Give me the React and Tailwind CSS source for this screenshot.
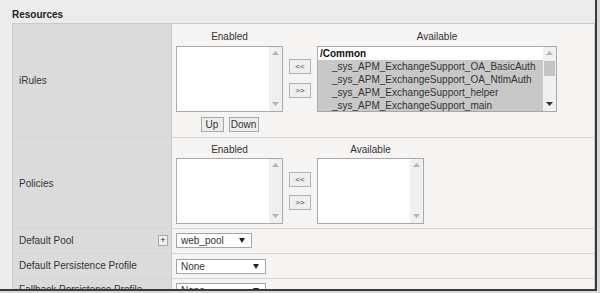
import React from "react";

function Up({ c = "#a8a8a8" }) {
  return (
    <svg width="7" height="4" viewBox="0 0 7 4">
      <path d="M0 4L3.5 0L7 4Z" fill={c} />
    </svg>
  );
}
function Down({ c = "#a8a8a8" }) {
  return (
    <svg width="7" height="4" viewBox="0 0 7 4">
      <path d="M0 0L3.5 4L7 0Z" fill={c} />
    </svg>
  );
}

function ListBox({ w, children, thumb, downDark }) {
  return (
    <div
      className="h-[66px] border border-[#a9a9a9] bg-white flex"
      style={{ width: w }}
    >
      <div className="flex-1 overflow-hidden">{children}</div>
      <div className="w-[13px] bg-[#f0f0f0] flex flex-col items-center justify-between pt-[4px] pb-[5px] relative">
        <Up c="#b4b4b4" />
        {thumb && (
          <div className="absolute left-[1px] right-[1px] top-[14px] h-[15px] bg-[#c4c4c4]" />
        )}
        <Down c={downDark ? "#333" : "#b4b4b4"} />
      </div>
    </div>
  );
}

function MoveButtons() {
  return (
    <div className="flex flex-col gap-[9px]">
      <div className="w-[22px] h-[15px] border border-[#b3b3b3] bg-[#efefef] flex items-center justify-center text-[8px] leading-none text-[#444]">
        &lt;&lt;
      </div>
      <div className="w-[22px] h-[15px] border border-[#b3b3b3] bg-[#efefef] flex items-center justify-center text-[8px] leading-none text-[#444]">
        &gt;&gt;
      </div>
    </div>
  );
}

function Select({ w, value }) {
  return (
    <div
      className="h-[15px] border border-[#a5a5a5] bg-white flex items-center justify-between pl-[4px] pr-[6px] text-[10px] text-[#333]"
      style={{ width: w }}
    >
      <span>{value}</span>
      <svg width="6" height="5" viewBox="0 0 6 5">
        <path d="M0 0L3 5L6 0Z" fill="#222" />
      </svg>
    </div>
  );
}

const items = [
  "_sys_APM_ExchangeSupport_OA_BasicAuth",
  "_sys_APM_ExchangeSupport_OA_NtlmAuth",
  "_sys_APM_ExchangeSupport_helper",
  "_sys_APM_ExchangeSupport_main",
];

export default function App() {
  return (
    <div className="w-[600px] h-[293px] bg-[#d9d9d9] overflow-hidden font-['Liberation_Sans',Arial,sans-serif] text-[10px] text-[#333]">
      <div className="w-[597px] h-[291px] bg-[#ececec] border-r-2 border-b-2 border-[#3a3a3a] overflow-hidden pl-[12px]">
        <div className="h-[23px] pt-[9px] font-bold leading-[12px] text-[#222]">
          Resources
        </div>
        <div className="border-t border-l border-r border-[#cacaca]">
          {/* iRules */}
          <div className="flex h-[114px] border-b border-[#d6d6d6]">
            <div className="w-[159px] bg-[#dcdbdb] border-r border-[#c6c6c6] flex items-center pl-[6px]">
              iRules
            </div>
            <div className="flex-1 bg-[#f5f4f3] pl-[4px] pt-[7px] flex items-start">
              <div className="flex flex-col items-center">
                <div className="h-[12px] leading-[12px]">Enabled</div>
                <div className="mt-[3px]">
                  <ListBox w={107} />
                </div>
                <div className="mt-[5px] flex gap-[5px]">
                  <div className="w-[23px] h-[15px] border border-[#a8a8a8] bg-[#ececec] flex items-center justify-center">
                    Up
                  </div>
                  <div className="w-[30px] h-[15px] border border-[#a8a8a8] bg-[#ececec] flex items-center justify-center">
                    Down
                  </div>
                </div>
              </div>
              <div className="ml-[6px] mt-[28px]">
                <MoveButtons />
              </div>
              <div className="ml-[6px] flex flex-col items-center">
                <div className="h-[12px] leading-[12px]">Available</div>
                <div className="mt-[3px]">
                  <ListBox w={240} thumb downDark>
                    <div className="h-[13px] leading-[13px] pl-[2px] font-bold text-[#111]">
                      /Common
                    </div>
                    {items.map((t) => (
                      <div
                        key={t}
                        className="h-[13px] leading-[13px] pl-[14px] bg-[#c8c8c8] whitespace-nowrap"
                      >
                        {t}
                      </div>
                    ))}
                  </ListBox>
                </div>
              </div>
            </div>
          </div>
          {/* Policies */}
          <div className="flex h-[91px] border-b border-[#d6d6d6]">
            <div className="w-[159px] bg-[#dcdbdb] border-r border-[#c6c6c6] flex items-center pl-[6px]">
              Policies
            </div>
            <div className="flex-1 bg-[#f5f4f3] pl-[4px] pt-[6px] flex items-start">
              <div className="flex flex-col items-center">
                <div className="h-[12px] leading-[12px]">Enabled</div>
                <div className="mt-[2px]">
                  <ListBox w={107} />
                </div>
              </div>
              <div className="ml-[6px] mt-[28px]">
                <div className="flex flex-col gap-[8px]">
                  <div className="w-[22px] h-[15px] border border-[#b3b3b3] bg-[#efefef] flex items-center justify-center text-[8px] leading-none text-[#444]">
                    &lt;&lt;
                  </div>
                  <div className="w-[22px] h-[15px] border border-[#b3b3b3] bg-[#efefef] flex items-center justify-center text-[8px] leading-none text-[#444]">
                    &gt;&gt;
                  </div>
                </div>
              </div>
              <div className="ml-[6px] flex flex-col items-center">
                <div className="h-[12px] leading-[12px]">Available</div>
                <div className="mt-[2px]">
                  <ListBox w={107} />
                </div>
              </div>
            </div>
          </div>
          {/* Default Pool */}
          <div className="flex h-[25px] border-b border-[#d6d6d6]">
            <div className="w-[159px] bg-[#dcdbdb] border-r border-[#c6c6c6] flex items-center justify-between pl-[6px] pr-[3px]">
              <span className="-mt-[2px]">Default Pool</span>
              <div className="w-[10px] h-[11px] border border-[#a8a8a8] bg-[#eeeeee] flex items-center justify-center text-[9px] leading-none -mt-[1px]">
                +
              </div>
            </div>
            <div className="flex-1 bg-[#f5f4f3] pl-[4px] flex items-center">
              <div className="-mt-[1px]">
                <Select w={76} value="web_pool" />
              </div>
            </div>
          </div>
          {/* Default Persistence Profile */}
          <div className="flex h-[25px] border-b border-[#d6d6d6]">
            <div className="w-[159px] bg-[#dcdbdb] border-r border-[#c6c6c6] flex items-center pl-[6px]">
              <span className="-mt-[1px]">Default Persistence Profile</span>
            </div>
            <div className="flex-1 bg-[#f5f4f3] pl-[4px] flex items-center">
              <Select w={90} value="None" />
            </div>
          </div>
          {/* Fallback Persistence Profile */}
          <div className="flex h-[25px] border-b border-[#d6d6d6]">
            <div className="w-[159px] bg-[#dcdbdb] border-r border-[#c6c6c6] flex items-center pl-[6px]">
              <span className="-mt-[3px]">Fallback Persistence Profile</span>
            </div>
            <div className="flex-1 bg-[#f5f4f3] pl-[4px] flex items-center">
              <div className="-mt-[2px]">
                <Select w={90} value="None" />
              </div>
            </div>
          </div>
        </div>
      </div>
    </div>
  );
}
